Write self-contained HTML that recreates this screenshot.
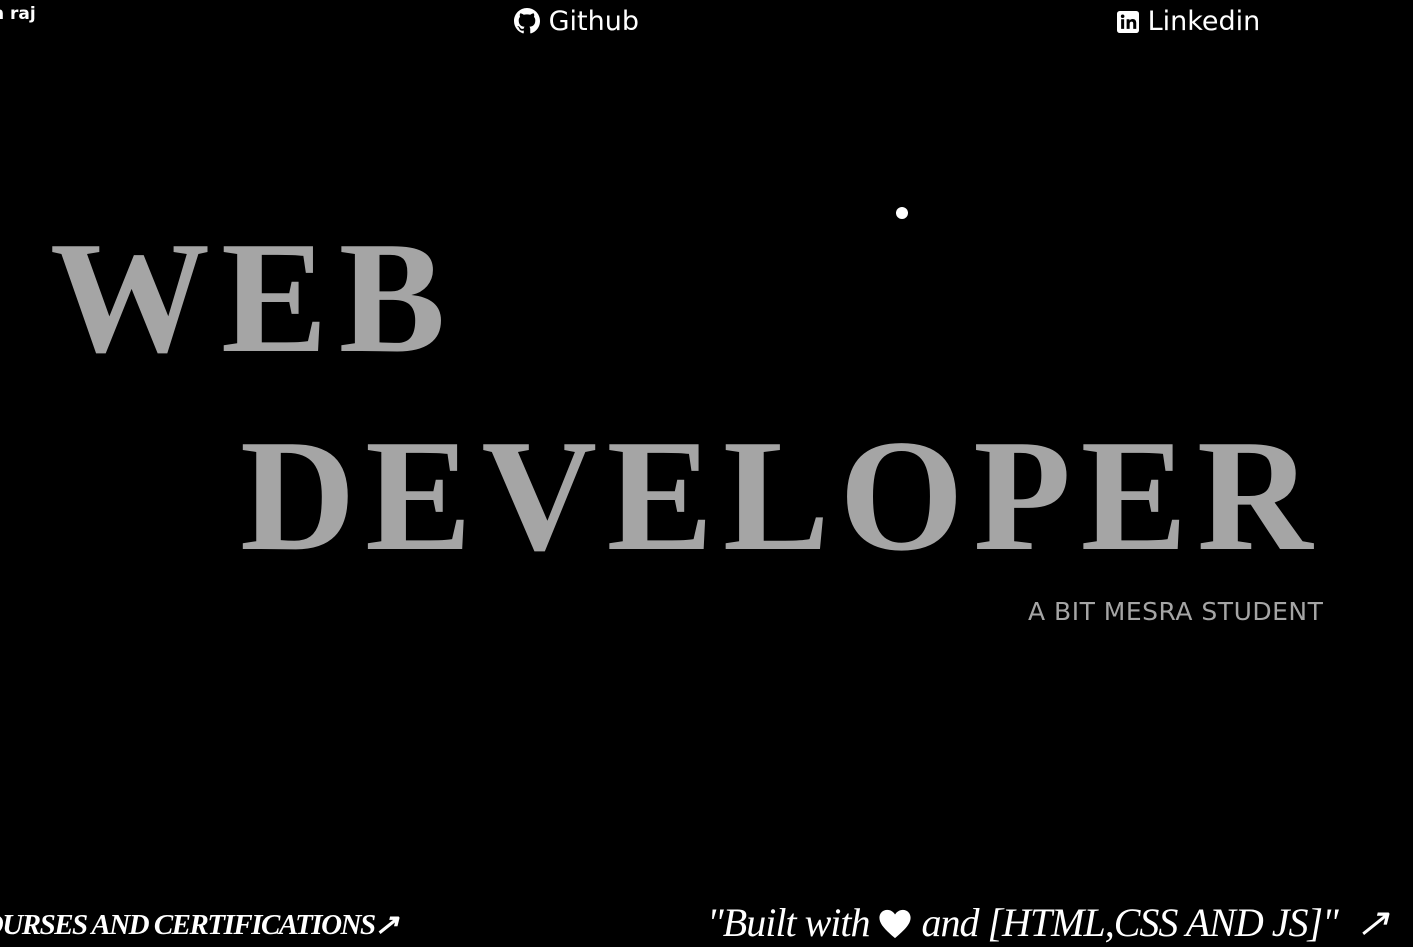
<!DOCTYPE html>
<html><head><style>
html,body{margin:0;background:#000;width:1413px;height:947px;overflow:hidden;position:relative;font-family:"Comic Sans MS","DejaVu Sans",sans-serif;color:#fff}
.a{position:absolute;white-space:nowrap}
.big{font-family:"Liberation Serif",serif;font-weight:bold;color:#a5a5a5;font-size:160px;line-height:1}
</style></head><body>
<div class="a" style="left:-8px;top:4px;font-size:17px;font-weight:bold">n raj</div>
<div class="a" style="left:514px;top:6px;font-size:27px">
<svg width="26" height="26" viewBox="0 0 16 16" style="vertical-align:-4px"><path fill="#fff" d="M8 0C3.58 0 0 3.58 0 8c0 3.54 2.290 6.53 5.47 7.59.4.07.55-.17.55-.38v-1.33c-2.23.48-2.7-1.070-2.7-1.070-.36-.92-.89-1.17-.89-1.170-.73-.5.06-.49.06-.49.8.06 1.23.83 1.23.83.71 1.22 1.87.87 2.33.66.07-.52.28-.87.5-1.070-1.780-.2-3.65-.89-3.65-3.96 0-.87.31-1.59.82-2.15-.08-.2-.36-1.02.08-2.12 0 0 .67-.21 2.2.82a7.6 7.6 0 014 0c1.53-1.04 2.2-.82 2.2-.82.44 1.1.16 1.92.08 2.12.51.56.82 1.27.82 2.15 0 3.08-1.87 3.75-3.65 3.95.29.25.54.73.54 1.48v2.2c0 .21.15.46.55.38A8 8 0 0016 8c0-4.42-3.58-8-8-8z"/></svg> Github</div>
<div class="a" style="left:1117px;top:6px;font-size:27px">
<svg width="22" height="22" viewBox="0 0 16 16" style="vertical-align:-3px"><rect width="16" height="16" rx="2" fill="#fff"/><rect x="3" y="6" width="2.2" height="7" fill="#000"/><circle cx="4.1" cy="3.8" r="1.3" fill="#000"/><path d="M7 6h2.1v1c.5-.8 1.3-1.2 2.3-1.2 1.7 0 2.6 1 2.6 3V13h-2.2V9.2c0-1-.4-1.5-1.2-1.5-.9 0-1.4.6-1.4 1.6V13H7z" fill="#000"/></svg> Linkedin</div>
<div class="a" style="left:896px;top:207px;width:12px;height:12px;border-radius:50%;background:#fff"></div>
<div class="a big" style="left:50px;top:217px;letter-spacing:11px">WEB</div>
<div class="a big" style="left:240px;top:415px;letter-spacing:9.6px">DEVELOPER</div>
<div class="a" style="left:1028px;top:597px;font-size:25px;letter-spacing:0.5px;color:#a5a5a5">A BIT MESRA STUDENT</div>
<div class="a" style="left:-35px;top:907px;font-family:'Liberation Serif',serif;font-style:italic;font-weight:bold;font-size:29px;letter-spacing:-1.5px">COURSES AND CERTIFICATIONS&#8599;</div>
<div class="a" style="left:707px;top:899px;font-family:'Liberation Serif',serif;font-style:italic;font-size:40px;letter-spacing:-1px">"Built with <svg width="34" height="32" viewBox="0 0 24 22" style="vertical-align:-4px"><path fill="#fff" d="M12 21C5 15 1 11 1 6.5 1 3.4 3.4 1 6.5 1 8.8 1 10.8 2.4 12 4.3 13.2 2.4 15.2 1 17.5 1 20.6 1 23 3.4 23 6.5 23 11 19 15 12 21z"/></svg> and [HTML,CSS AND JS]" &nbsp;&#8599;</div>
</body></html>
